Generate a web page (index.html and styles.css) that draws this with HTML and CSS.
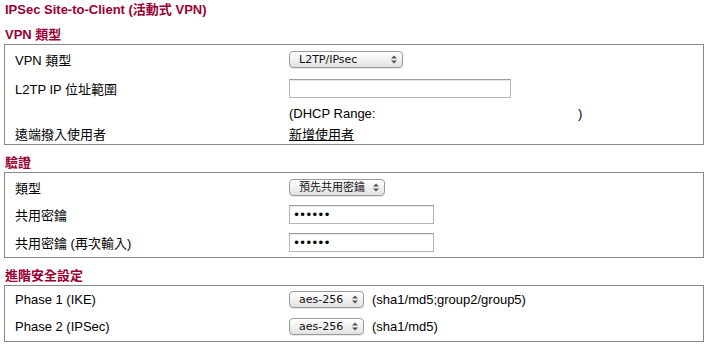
FILE: index.html
```html
<html><head><meta charset="utf-8">
    <link rel="stylesheet" href="styles.css">
</head>
<body>
<div class="page">
    <div class="title">IPSec Site-to-Client (活動式 VPN)</div>

    <div class="section">
        <div class="sectionHead">VPN 類型</div>
        <div class="box boxVpn">
            <div class="lbl">VPN 類型</div>
            <div class="val">
                <span class="selWrap w114"><select><option>L2TP/IPsec</option></select><svg class="arrows" width="6" height="9" viewBox="0 0 6 9"><path d="M0 3.5 L3 0.5 L6 3.5 Z M0 5.5 L3 8.5 L6 5.5 Z" fill="#555"/></svg></span>
            </div>
            <div class="lbl">L2TP IP 位址範圍</div>
            <div class="val"><input type="text" class="txt w222"></div>
            <div class="lbl"></div>
            <div class="val"><span class="dhcp">(DHCP Range:</span>)</div>
            <div class="lbl">遠端撥入使用者</div>
            <div class="val"><a href="#" class="link">新增使用者</a></div>
        </div>
    </div>

    <div class="section">
        <div class="sectionHead">驗證</div>
        <div class="box boxAuth">
            <div class="lbl">類型</div>
            <div class="val">
                <span class="selWrap w96"><select><option>預先共用密鑰</option></select><svg class="arrows" width="6" height="9" viewBox="0 0 6 9"><path d="M0 3.5 L3 0.5 L6 3.5 Z M0 5.5 L3 8.5 L6 5.5 Z" fill="#555"/></svg></span>
            </div>
            <div class="lbl">共用密鑰</div>
            <div class="val"><input type="password" class="txt pw w145" value="secret"></div>
            <div class="lbl">共用密鑰 (再次輸入)</div>
            <div class="val"><input type="password" class="txt pw w145" value="secret"></div>
        </div>
    </div>

    <div class="section">
        <div class="sectionHead">進階安全設定</div>
        <div class="box boxAdv">
            <div class="lbl">Phase 1 (IKE)</div>
            <div class="val">
                <span class="selWrap w75"><select><option>aes-256</option></select><svg class="arrows" width="6" height="9" viewBox="0 0 6 9"><path d="M0 3.5 L3 0.5 L6 3.5 Z M0 5.5 L3 8.5 L6 5.5 Z" fill="#555"/></svg></span>
                <span class="note">(sha1/md5;group2/group5)</span>
            </div>
            <div class="lbl">Phase 2 (IPSec)</div>
            <div class="val">
                <span class="selWrap w75"><select><option>aes-256</option></select><svg class="arrows" width="6" height="9" viewBox="0 0 6 9"><path d="M0 3.5 L3 0.5 L6 3.5 Z M0 5.5 L3 8.5 L6 5.5 Z" fill="#555"/></svg></span>
                <span class="note">(sha1/md5)</span>
            </div>
        </div>
    </div>
</div>
</body></html>
```

FILE: styles.css
```css
body {
    margin: 0;
    background: #fff;
    color: #000;
    font-family: "Liberation Sans", Arial, "Noto Sans CJK TC", sans-serif;
    font-size: 13px;
}

.page {
    width: 700px;
    padding: 2px 0 0 4px;
}

.title {
    height: 16px;
    line-height: 16px;
    font-weight: bold;
    color: #990033;
    padding-left: 1px;
}

.section {
    margin-top: 9px;
}

.section + .section {
    margin-top: 10px;
}

.sectionHead {
    height: 16px;
    line-height: 16px;
    font-weight: bold;
    color: #990033;
    padding-left: 1px;
    margin-bottom: 1px;
}

.box {
    border: 1px solid #888;
    display: grid;
    grid-template-columns: 284px 1fr;
    align-items: center;
}

.boxVpn {
    grid-template-rows: 28px 31px 18px 22px;
}

.boxAuth {
    grid-template-rows: 28px 27px 29px;
}

.boxAdv {
    grid-template-rows: 26px 29px;
}

.lbl {
    padding-left: 10px;
}

.val {
    display: flex;
    align-items: center;
    gap: 8px;
}

.selWrap {
    position: relative;
    display: inline-block;
    height: 17px;
}

.selWrap select {
    -webkit-appearance: none;
    appearance: none;
    width: 100%;
    height: 17px;
    margin: 0;
    padding: 0 0 0 9px;
    border: 1px solid #9a9a9a;
    border-radius: 4px;
    background: linear-gradient(#ffffff, #f1f1f1 50%, #e2e2e2);
    box-shadow: 0 1px 0 rgba(0, 0, 0, 0.08);
    font-family: "DejaVu Sans", "Noto Sans CJK TC", sans-serif;
    font-size: 11px;
    color: #111;
    line-height: 15px;
}

.w114 { width: 114px; }
.w96 { width: 96px; }
.w75 { width: 75px; }

.arrows {
    position: absolute;
    right: 6px;
    top: 4px;
}

.txt {
    height: 19px;
    margin: 0;
    padding: 0 3px;
    border: 1px solid #b5b5b5;
    border-top-color: #9c9c9c;
    box-shadow: inset 0 1px 1px rgba(0, 0, 0, 0.1);
    font-size: 10px;
    box-sizing: border-box;
}

.pw {
    font-family: "DejaVu Sans", sans-serif;
    font-size: 12px;
    letter-spacing: -1px;
}

.w222 { width: 222px; }
.w145 { width: 145px; }

.dhcp {
    display: inline-block;
    width: 289px;
}

.val .dhcp {
    margin-right: -8px;
}

.link {
    color: #000;
    text-decoration: underline;
}
```
